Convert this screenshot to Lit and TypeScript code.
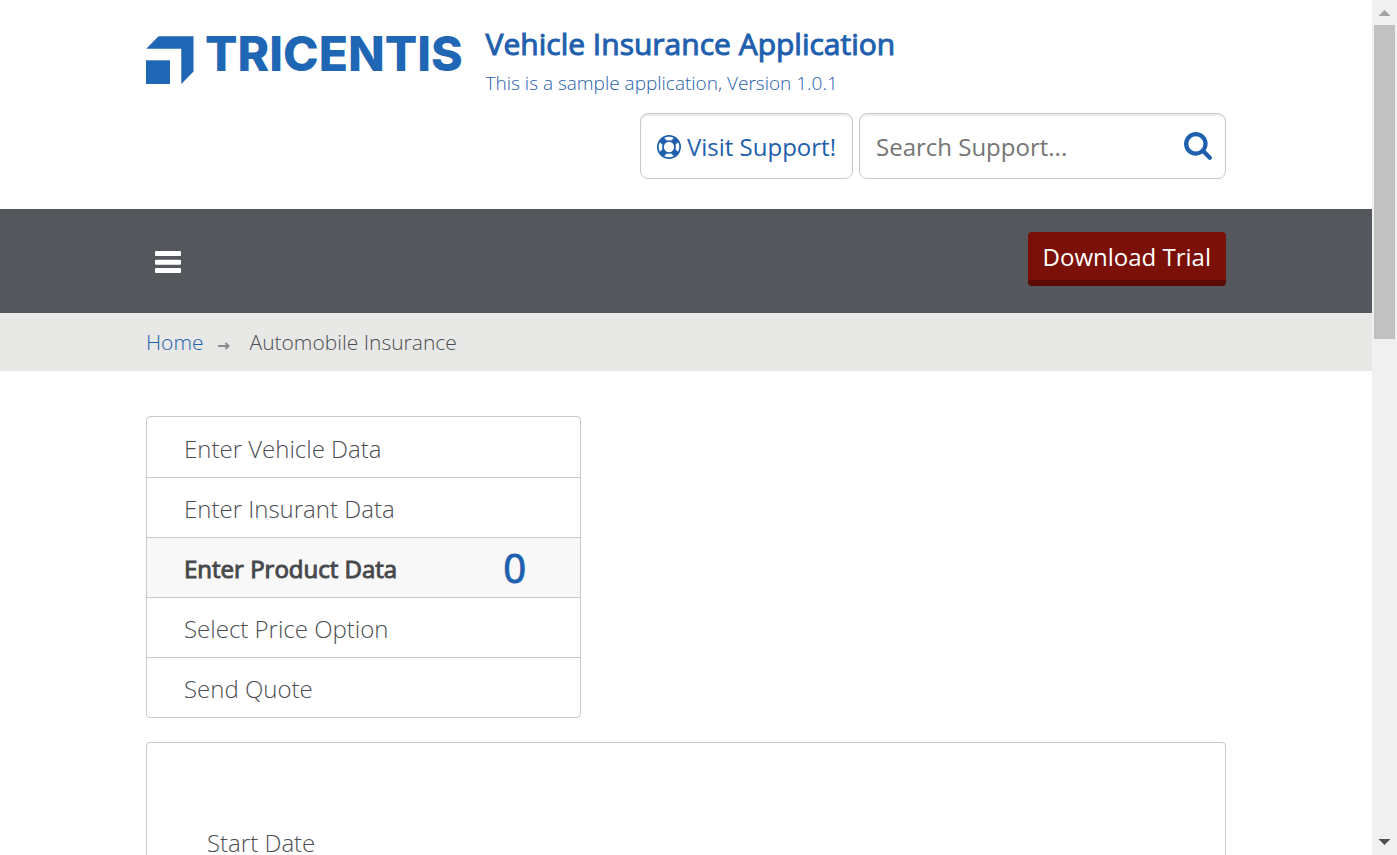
import { LitElement, html, css } from "lit";
import { customElement, property } from "lit/decorators.js";

interface Step {
  label: string;
  count?: number;
}

@customElement("scroll-track")
class ScrollTrack extends LitElement {
  static styles = css`
    :host {
      display: flex;
      flex-direction: column;
      align-items: center;
      flex: none;
      width: 25px;
      height: 100%;
      background: #f0f0f0;
    }
    .arrow {
      display: block;
      flex: none;
      width: 25px;
      height: 25px;
    }
    .rail {
      flex: 1;
      width: 21px;
    }
    .thumb {
      height: 39%;
      background: #c1c1c1;
    }
  `;

  render() {
    return html`
      <svg class="arrow" viewBox="0 0 25 25" aria-hidden="true">
        <path d="M6.500 16L12.500 10L18.500 16z" fill="#a3a3a3" />
      </svg>
      <div class="rail"><div class="thumb"></div></div>
      <svg class="arrow" viewBox="0 0 25 25" aria-hidden="true">
        <path d="M6.500 9L12.500 15L18.500 9z" fill="#505050" />
      </svg>
    `;
  }
}

@customElement("step-list")
class StepList extends LitElement {
  @property({ attribute: false }) steps: Step[] = [];
  @property({ type: Number }) current = 0;

  static styles = css`
    :host {
      display: block;
    }
    .steps {
      margin: 0;
      padding: 0;
      list-style: none;
      max-width: 433px;
      border: 1px solid #c9c9ca;
      border-radius: 4px;
      overflow: hidden;
    }
    .item + .item {
      border-top: 1px solid #c9c9ca;
    }
    .link {
      display: flex;
      align-items: center;
      justify-content: space-between;
      box-sizing: border-box;
      height: 60px;
      padding: 0 54px 0 37px;
      color: #4c4e53;
      font-size: 24px;
      font-weight: 300;
      text-decoration: none;
    }
    .item + .item .link {
      height: 59px;
    }
    .label {
      padding-top: 2px;
    }
    .active {
      background: #f8f8f8;
      color: #47494c;
      font-weight: 400;
    }
    .active .label {
      -webkit-text-stroke: 1px currentColor;
    }
    .count {
      color: #1f60ae;
      font-size: 40px;
      line-height: 48px;
      -webkit-text-stroke: 1px currentColor;
    }
  `;

  render() {
    return html`
      <ul class="steps">
        ${this.steps.map(
          (s, i) => html`
            <li class="item">
              <a class="link ${i === this.current ? "active" : ""}" href="#step-${i + 1}">
                <span class="label">${s.label}</span>
                ${s.count === undefined ? "" : html`<span class="count">${s.count}</span>`}
              </a>
            </li>
          `
        )}
      </ul>
    `;
  }
}

@customElement("app-root")
class AppRoot extends LitElement {
  private steps: Step[] = [
    { label: "Enter Vehicle Data" },
    { label: "Enter Insurant Data" },
    { label: "Enter Product Data", count: 0 },
    { label: "Select Price Option" },
    { label: "Send Quote" },
  ];

  static styles = css`
    :host {
      display: flex;
      height: 100vh;
      background: #fff;
      color: #4c4e53;
      font-family: "Open Sans", "Noto Sans", sans-serif;
      font-size: 24px;
    }
    .page {
      flex: 1;
      min-width: 0;
      overflow-y: auto;
      scrollbar-width: none;
    }
    .wrap {
      max-width: 1080px;
      margin: 0 auto;
    }
    .header {
      padding: 26px 0 30px;
    }
    .brand {
      display: flex;
      align-items: flex-start;
      gap: 23px;
    }
    .logo {
      display: flex;
      gap: 11px;
      padding-top: 10px;
      color: #1f66b5;
      text-decoration: none;
    }
    .mark {
      display: block;
      width: 48px;
      height: 48px;
    }
    .wordmark {
      font-family: Inter, sans-serif;
      font-size: 48px;
      font-weight: 800;
      line-height: 36px;
    }
    .titles {
      display: grid;
      gap: 8px;
      color: #1f60ae;
    }
    .title {
      margin: 0;
      font-size: 30px;
      font-weight: 400;
      line-height: 36px;
      -webkit-text-stroke: 1px currentColor;
    }
    .subtitle {
      margin: 0;
      font-size: 19px;
      font-weight: 300;
      line-height: 26px;
    }
    .tools {
      display: flex;
      justify-content: flex-end;
      gap: 6px;
      margin-top: 17px;
    }
    .box {
      display: flex;
      align-items: center;
      box-sizing: border-box;
      height: 66px;
      border: 1px solid #c9c9ca;
      border-radius: 8px;
      box-shadow: inset 0 2px 1px #ebebeb;
      background: #fff;
    }
    .support {
      gap: 6px;
      padding: 0 16px;
      color: #1f60ae;
      text-decoration: none;
    }
    .ring {
      width: 24px;
      height: 24px;
      padding-top: 2px;
      fill: currentColor;
    }
    .search {
      width: 367px;
      padding: 0 13px 0 16px;
    }
    .query {
      flex: 1;
      min-width: 0;
      padding: 0;
      border: 0;
      outline: 0;
      background: none;
      color: #4c4e53;
      font: inherit;
    }
    .query::placeholder {
      color: #757575;
    }
    .go,
    .burger {
      display: block;
      border: 0;
      background: none;
      cursor: pointer;
    }
    .go {
      padding: 0;
      color: #1f60ae;
    }
    .lens {
      display: block;
      width: 28px;
      height: 28px;
      fill: currentColor;
    }
    .bar {
      background: #54575b;
    }
    .bar-row {
      display: flex;
      align-items: flex-start;
      justify-content: space-between;
      padding: 23px 0 21px;
    }
    .burger {
      padding: 19px 9px;
    }
    .lines {
      display: block;
      width: 26px;
      height: 22px;
      fill: #fff;
    }
    .trial {
      padding: 2px 15px 0;
      border-radius: 4px;
      background: #7b1008 linear-gradient(#5a0a04, #5a0a04) bottom / 100% 6px no-repeat;
      color: #fff;
      line-height: 46px;
      padding-bottom: 6px;
      text-decoration: none;
    }
    .crumbs {
      background: #e8e8e6;
    }
    .crumb-row {
      display: flex;
      align-items: center;
      font-size: 21px;
      font-weight: 300;
      line-height: 58px;
    }
    .home {
      color: #1f60ae;
      text-decoration: none;
    }
    .chevron {
      width: 12px;
      height: 8px;
      padding-top: 8px;
      margin: 0 20px 0 14px;
      stroke: #8a8b8c;
      fill: none;
    }
    .main {
      padding: 45px 0;
    }
    .panel {
      margin-top: 24px;
      padding: 82px 60px 60px;
      border: 1px solid #c9c9ca;
      border-radius: 4px;
    }
    .field-label {
      display: block;
      font-weight: 300;
      line-height: 36px;
    }
    .field {
      box-sizing: border-box;
      width: 100%;
      height: 60px;
      margin-top: 12px;
      padding: 0 16px;
      border: 1px solid #c9c9ca;
      border-radius: 8px;
      color: inherit;
      font: inherit;
    }
  `;

  render() {
    return html`
      <div class="page">
        <header class="wrap header">
          <div class="brand">
            <a class="logo" href="#home">
              <svg class="mark" viewBox="0 0 48 48" fill="currentColor" aria-hidden="true">
                <path d="M0.300 12.700L12.500 0.300H47.500V35.500L35.300 47.900V12.700z" />
                <path d="M0 24.300H24V48H0z" />
              </svg>
              <span class="wordmark">TRICENTIS</span>
            </a>
            <div class="titles">
              <h1 class="title">Vehicle Insurance Application</h1>
              <p class="subtitle">This is a sample application, Version 1.0.1</p>
            </div>
          </div>
          <div class="tools">
            <a class="box support" href="#support">
              <svg class="ring" viewBox="0 0 1792 1792" fill-rule="evenodd" aria-hidden="true">
                <path
                  d="M896 0q182 0 348 71t286 191 191 286 71 348-71 348-191 286-286 191-348 71-348-71-286-191-191-286-71-348 71-348 191-286 286-191 348-71zm0 128q-190 0-361 90l194 194q82-28 167-28t167 28l194-194q-171-90-361-90zm-678 1129l194-194q-28-82-28-167t28-167l-194-194q-90 171-90 361t90 361zm678 407q190 0 361-90l-194-194q-82 28-167 28t-167-28l-194 194q171 90 361 90zm0-384q159 0 271.500-112.500t112.500-271.500-112.500-271.500-271.500-112.500-271.500 112.500-112.500 271.500 112.500 271.500 271.500 112.500zm484-217l194 194q90-171 90-361t-90-361l-194 194q28 82 28 167t-28 167z"
                />
              </svg>
              Visit Support!
            </a>
            <form class="box search" role="search" @submit=${(e: Event) => e.preventDefault()}>
              <input class="query" type="text" aria-label="Search Support" placeholder="Search Support..." />
              <button class="go" type="submit" aria-label="Search">
                <svg class="lens" viewBox="64 128 1664 1664" aria-hidden="true">
                  <path
                    d="M1216 832q0-185-131.500-316.500t-316.500-131.500-316.500 131.500-131.500 316.500 131.500 316.500 316.500 131.500 316.500-131.500 131.500-316.500zm512 832q0 52-38 90t-90 38q-54 0-90-38l-343-342q-179 124-399 124-143 0-273.500-55.500t-225-150-150-225-55.500-273.500 55.500-273.500 150-225 225-150 273.500-55.500 273.500 55.500 225 150 150 225 55.500 273.500q0 220-124 399l343 343q37 37 37 90z"
                  />
                </svg>
              </button>
            </form>
          </div>
        </header>

        <div class="bar">
          <div class="wrap bar-row">
            <button class="burger" type="button" aria-label="Menu">
              <svg class="lines" viewBox="0 0 26 22" aria-hidden="true">
                <rect x="0" y="0" width="26" height="5" rx="1" />
                <rect x="0" y="8.700" width="26" height="5" rx="1" />
                <rect x="0" y="17" width="26" height="5" rx="1" />
              </svg>
            </button>
            <a class="trial" href="#trial">Download Trial</a>
          </div>
        </div>

        <nav class="crumbs" aria-label="Breadcrumb">
          <div class="wrap crumb-row">
            <a class="home" href="#home">Home</a>
            <svg class="chevron" viewBox="0 0 12 8" stroke-width="2" aria-hidden="true">
              <path d="M0 4H10.500M7.500 1L10.500 4L7.500 7" />
            </svg>
            <span>Automobile Insurance</span>
          </div>
        </nav>

        <main class="wrap main">
          <step-list .steps=${this.steps} .current=${2}></step-list>
          <form class="panel" @submit=${(e: Event) => e.preventDefault()}>
            <label class="field-label" for="start-date">Start Date</label>
            <input class="field" id="start-date" type="text" />
          </form>
        </main>
      </div>
      <scroll-track></scroll-track>
    `;
  }
}
